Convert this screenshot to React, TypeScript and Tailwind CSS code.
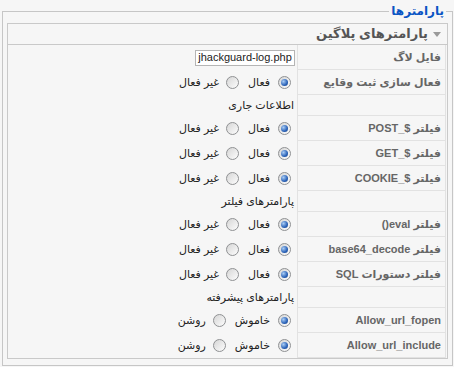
import React from "react";

type Row =
  | { kind: "input"; label: string; value: string }
  | { kind: "radio"; label: string; on?: string; off?: string }
  | { kind: "spacer"; text: string; h: string };

const ROWS: Row[] = [
  { kind: "input", label: "فایل لاگ", value: "jhackguard-log.php" },
  { kind: "radio", label: "فعال سازی ثبت وقایع" },
  { kind: "spacer", text: "اطلاعات جاری", h: "h-[21px]" },
  { kind: "radio", label: "فیلتر $_POST" },
  { kind: "radio", label: "فیلتر $_GET" },
  { kind: "radio", label: "فیلتر $_COOKIE" },
  { kind: "spacer", text: "پارامترهای فیلتر", h: "h-[21px]" },
  { kind: "radio", label: "فیلتر eval()" },
  { kind: "radio", label: "فیلتر base64_decode" },
  { kind: "radio", label: "فیلتر دستورات SQL" },
  { kind: "spacer", text: "پارامترهای پیشرفته", h: "h-[21px]" },
  { kind: "radio", label: "Allow_url_fopen", on: "خاموش", off: "روشن" },
  { kind: "radio", label: "Allow_url_include", on: "خاموش", off: "روشن" },
];

function Radio({ checked }: { checked?: boolean }) {
  return (
    <span className="w-[13px] h-[13px] shrink-0 rounded-full border border-[#8f9193] bg-gradient-to-br from-[#d6d6d6] to-[#fdfdfd] flex items-center justify-center">
      {checked && <span className="w-[7px] h-[7px] rounded-full bg-[radial-gradient(circle_at_35%_35%,#a9cdf5,#2a62b8_60%,#173f80)]" />}
    </span>
  );
}

function RadioGroup({ on = "فعال", off = "غیر فعال" }: { on?: string; off?: string }) {
  return (
    <div className="flex items-center text-[11px] text-[#222]">
      <Radio checked />
      <span className="mr-[8px]">{on}</span>
      <span className="mr-[9px]"><Radio /></span>
      <span className="mr-[7px]">{off}</span>
    </div>
  );
}

export default function App() {
  return (
    <div dir="rtl" className="w-[454px] h-[367px] bg-[#f6f6f6] pt-[2px] font-['Liberation_Sans','DejaVu_Sans',sans-serif] overflow-hidden">
      <fieldset className="ml-[2px] mr-[1px] border border-[#c6c6c6] px-[4px] pb-[6px]">
        <legend className="mr-[2px] px-[2px] text-[12px] leading-[18px] font-bold text-[#0b55c4]">پارامترها</legend>
        <div className="mt-[3px] border border-[#c9c9c9]">
          <div className="h-[21px] border-b border-[#c9c9c9] flex items-center pr-[6px] gap-[5px]">
            <span className="w-0 h-0 border-x-[4px] border-x-transparent border-t-[5px] border-t-[#9a9a9a]" />
            <span className="text-[13px] font-bold text-[#555]">پارامترهای پلاگین</span>
          </div>
          <div className="px-[1px]">
            {ROWS.map((r, i) => (
              <div key={i} className={`flex ${r.kind === "spacer" ? r.h : "h-[25px]"}`}>
                <div className="w-[149px] shrink-0 border-x border-b border-[#e2e2e2] flex items-center pr-[4px] text-[11px] font-bold text-[#666]">
                  {r.kind !== "spacer" && <span>{r.label}</span>}
                </div>
                <div className="flex-1 flex items-center pr-[6px]">
                  {r.kind === "input" && (
                    <div className="-mr-[4px] w-[100px] h-[16px] border border-[#b5b5b5] bg-white flex items-center justify-center text-[11px] text-[#222]" dir="ltr">
                      {r.value}
                    </div>
                  )}
                  {r.kind === "radio" && <RadioGroup on={r.on} off={r.off} />}
                  {r.kind === "spacer" && <span className="-mr-[3px] text-[11px] text-[#222]">{r.text}</span>}
                </div>
              </div>
            ))}
          </div>
        </div>
      </fieldset>
    </div>
  );
}
